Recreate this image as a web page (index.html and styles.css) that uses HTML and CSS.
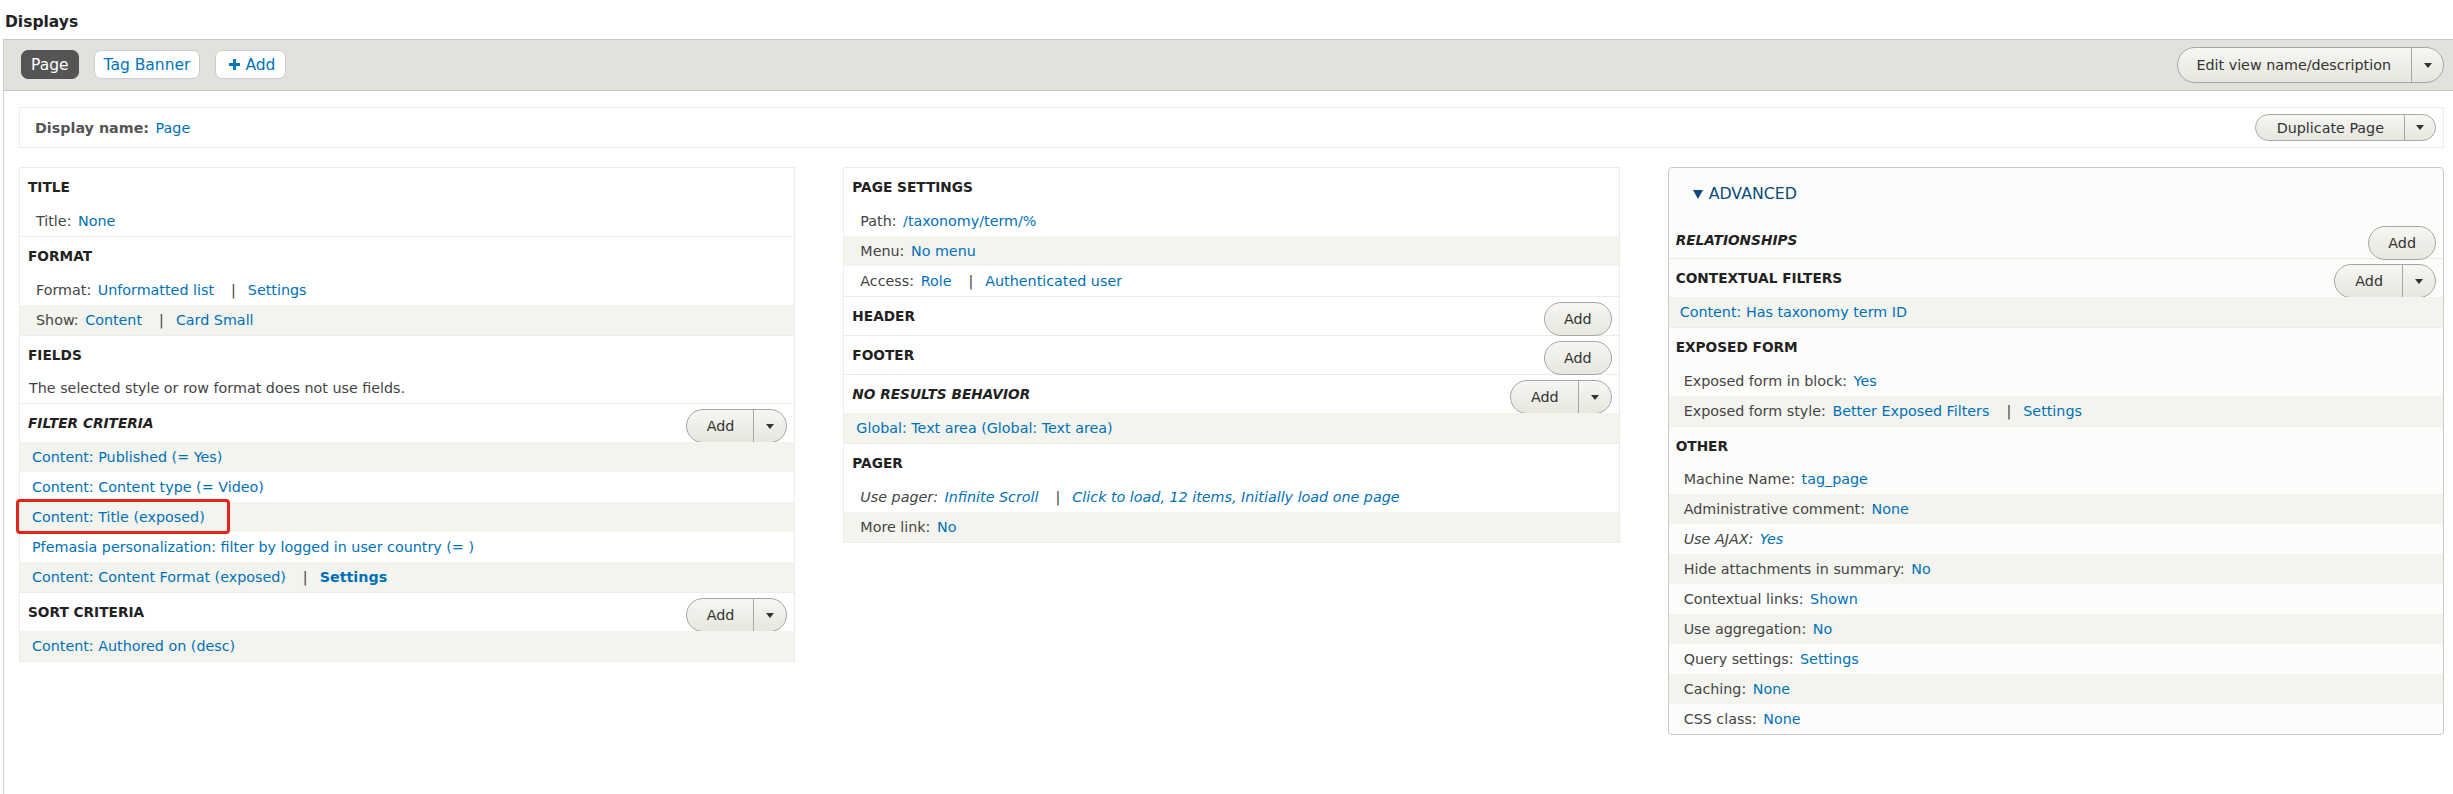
FILE: index.html
```html
<!DOCTYPE html>
<html lang="en">
<head>
<meta charset="utf-8">
<title>Displays</title>
<link rel="stylesheet" href="styles.css">
</head>
<body>
<h2 class="page-title">Displays</h2>
<div class="display-wrap">
  <div class="display-bar">
    <ul class="display-tabs">
      <li><a class="tab is-active">Page</a></li>
      <li><a class="tab">Tag Banner</a></li>
      <li><a class="tab tab-add"><svg class="plus" viewBox="0 0 12 12" width="11" height="11"><path d="M4.4 0h3.2v4.4H12v3.2H7.6V12H4.4V7.6H0V4.4h4.4z" fill="#0074bd"/></svg>Add</a></li>
    </ul>
    <div class="dropbutton db-lg"><span class="db-main">Edit view name/description</span><span class="db-toggle"><i class="caret"></i></span></div>
  </div>

  <div class="display-name-box">
    <div><span class="dn-label">Display name:</span> <a class="link">Page</a></div>
    <div class="dropbutton db-sm"><span class="db-main">Duplicate Page</span><span class="db-toggle"><i class="caret"></i></span></div>
  </div>

  <div class="columns">
    <!-- First column -->
    <div class="column">
      <section class="bucket">
        <div class="bucket-head"><h3>Title</h3></div>
        <div class="row"><span class="lbl">Title:</span> <a class="link">None</a></div>
      </section>
      <section class="bucket">
        <div class="bucket-head"><h3>Format</h3></div>
        <div class="row"><span class="lbl">Format:</span> <a class="link">Unformatted list</a><span class="sep">|</span><a class="link">Settings</a></div>
        <div class="row even"><span class="lbl">Show:</span> <a class="link">Content</a><span class="sep">|</span><a class="link">Card Small</a></div>
      </section>
      <section class="bucket">
        <div class="bucket-head"><h3>Fields</h3></div>
        <p class="note">The selected style or row format does not use fields.</p>
      </section>
      <section class="bucket">
        <div class="bucket-head"><h3 class="overridden">Filter criteria</h3>
          <div class="dropbutton"><span class="db-main">Add</span><span class="db-toggle"><i class="caret"></i></span></div>
        </div>
        <div class="row plain even"><a class="link">Content: Published (= Yes)</a></div>
        <div class="row plain"><a class="link">Content: Content type (= Video)</a></div>
        <div class="row plain even"><a class="link">Content: Title (exposed)</a><span class="highlight"></span></div>
        <div class="row plain"><a class="link">Pfemasia personalization: filter by logged in user country (= )</a></div>
        <div class="row plain even"><a class="link">Content: Content Format (exposed)</a><span class="sep">|</span><a class="link strong">Settings</a></div>
      </section>
      <section class="bucket">
        <div class="bucket-head"><h3>Sort criteria</h3>
          <div class="dropbutton"><span class="db-main">Add</span><span class="db-toggle"><i class="caret"></i></span></div>
        </div>
        <div class="row plain even"><a class="link">Content: Authored on (desc)</a></div>
      </section>
    </div>

    <!-- Second column -->
    <div class="column">
      <section class="bucket">
        <div class="bucket-head"><h3>Page settings</h3></div>
        <div class="row"><span class="lbl">Path:</span> <a class="link">/taxonomy/term/%</a></div>
        <div class="row even"><span class="lbl">Menu:</span> <a class="link">No menu</a></div>
        <div class="row"><span class="lbl">Access:</span> <a class="link">Role</a><span class="sep">|</span><a class="link">Authenticated user</a></div>
      </section>
      <section class="bucket">
        <div class="bucket-head"><h3>Header</h3><span class="button">Add</span></div>
      </section>
      <section class="bucket">
        <div class="bucket-head"><h3>Footer</h3><span class="button">Add</span></div>
      </section>
      <section class="bucket">
        <div class="bucket-head"><h3 class="overridden">No results behavior</h3>
          <div class="dropbutton"><span class="db-main">Add</span><span class="db-toggle"><i class="caret"></i></span></div>
        </div>
        <div class="row plain even"><a class="link">Global: Text area (Global: Text area)</a></div>
      </section>
      <section class="bucket">
        <div class="bucket-head"><h3>Pager</h3></div>
        <div class="row italic"><span class="lbl">Use pager:</span> <a class="link">Infinite Scroll</a><span class="sep">|</span><a class="link">Click to load, 12 items, Initially load one page</a></div>
        <div class="row even"><span class="lbl">More link:</span> <a class="link">No</a></div>
      </section>
    </div>

    <!-- Third column -->
    <div class="column advanced">
      <div class="summary"><span class="tri"></span>Advanced</div>
      <section class="bucket">
        <div class="bucket-head short"><h3 class="overridden">Relationships</h3><span class="button">Add</span></div>
      </section>
      <section class="bucket">
        <div class="bucket-head"><h3>Contextual filters</h3>
          <div class="dropbutton"><span class="db-main">Add</span><span class="db-toggle"><i class="caret"></i></span></div>
        </div>
        <div class="row plain even"><a class="link">Content: Has taxonomy term ID</a></div>
      </section>
      <section class="bucket">
        <div class="bucket-head"><h3>Exposed form</h3></div>
        <div class="row"><span class="lbl">Exposed form in block:</span> <a class="link">Yes</a></div>
        <div class="row even"><span class="lbl">Exposed form style:</span> <a class="link">Better Exposed Filters</a><span class="sep">|</span><a class="link">Settings</a></div>
      </section>
      <section class="bucket">
        <div class="bucket-head short"><h3>Other</h3></div>
        <div class="row"><span class="lbl">Machine Name:</span> <a class="link">tag_page</a></div>
        <div class="row even"><span class="lbl">Administrative comment:</span> <a class="link">None</a></div>
        <div class="row italic"><span class="lbl">Use AJAX:</span> <a class="link">Yes</a></div>
        <div class="row even"><span class="lbl">Hide attachments in summary:</span> <a class="link">No</a></div>
        <div class="row"><span class="lbl">Contextual links:</span> <a class="link">Shown</a></div>
        <div class="row even"><span class="lbl">Use aggregation:</span> <a class="link">No</a></div>
        <div class="row"><span class="lbl">Query settings:</span> <a class="link">Settings</a></div>
        <div class="row even"><span class="lbl">Caching:</span> <a class="link">None</a></div>
        <div class="row"><span class="lbl">CSS class:</span> <a class="link">None</a></div>
      </section>
    </div>
  </div>
</div>
</body>
</html>
```
FILE: styles.css
```css
html, body {
  margin: 0;
  padding: 0;
  background: #fff;
}
body {
  font-family: "DejaVu Sans", "Liberation Sans", sans-serif;
  font-size: 14.3px;
  color: #333;
  overflow: hidden;
}
.page-title {
  margin: 0;
  padding: 12px 0 0 5px;
  height: 27px;
  line-height: 20px;
  font-size: 15.5px;
  font-weight: bold;
  color: #222;
}
.display-wrap {
  margin-left: 3px;
  border-left: 1px solid #cfcfcf;
  min-height: calc(100vh - 39px);
}
.display-bar {
  display: flex;
  align-items: center;
  justify-content: space-between;
  height: 50px;
  padding: 0 9px 0 17px;
  background: #e1e2dc;
  border-top: 1px solid #c8c8c4;
  border-bottom: 1px solid #c8c8c4;
}
.display-tabs {
  list-style: none;
  margin: 0;
  padding: 0;
  display: flex;
  gap: 15px;
  margin-top: -1px;
}
.tab {
  display: flex;
  align-items: center;
  gap: 5px;
  height: 27px;
  padding: 0 9px;
  border: 1px solid #ccc;
  border-radius: 7px;
  background: #fff;
  color: #0074bd;
  font-size: 15.5px;
  text-decoration: none;
}
.tab.tab-add { padding: 0 10px 0 13px; }
.tab.is-active {
  background: #555;
  border-color: #555;
  color: #fff;
}
.tab .plus { display: block; }

.link {
  color: #0071b8;
  text-decoration: none;
}
.link.strong { font-weight: bold; }

.dropbutton {
  display: inline-flex;
  align-items: stretch;
  box-sizing: border-box;
  height: 34px;
  border: 1px solid #a6a6a6;
  border-radius: 20px;
  background: linear-gradient(#f6f6f3, #e7e7df);
  color: #333;
  white-space: nowrap;
}
.db-main {
  display: flex;
  align-items: center;
  padding: 0 19px 0 20px;
}
.db-toggle {
  display: flex;
  align-items: center;
  justify-content: center;
  width: 32px;
  border-left: 1px solid #a6a6a6;
}
.caret {
  width: 0;
  height: 0;
  border-left: 4px solid transparent;
  border-right: 4px solid transparent;
  border-top: 5px solid #333;
}
.db-lg { height: 36px; }
.db-lg .db-main { padding: 0 20px 0 18px; }
.db-lg .db-toggle { width: 31px; }
.db-sm { height: 27px; }
.db-sm .db-main { padding: 0 20px 0 21px; }
.db-sm .db-toggle { width: 30px; }

.button {
  display: inline-flex;
  align-items: center;
  box-sizing: border-box;
  height: 34px;
  padding: 0 19px;
  border: 1px solid #a6a6a6;
  border-radius: 20px;
  background: linear-gradient(#f6f6f3, #e7e7df);
  color: #333;
}

.display-name-box {
  display: flex;
  align-items: center;
  justify-content: space-between;
  box-sizing: border-box;
  height: 41px;
  margin: 16px 9px 0 15px;
  padding: 0 7px 0 15px;
  border: 1px solid #ececE8;
}
.dn-label {
  font-weight: bold;
  color: #555;
  margin-right: 2px;
}

.columns {
  display: grid;
  grid-template-columns: repeat(3, 1fr);
  column-gap: 48px;
  align-items: start;
  margin: 19px 9px 0 15px;
}
.column {
  border: 1px solid #ecece8;
  background: #fff;
}
.bucket + .bucket {
  border-top: 1px solid #ecece8;
}
.bucket-head {
  display: flex;
  justify-content: space-between;
  align-items: flex-start;
  height: 38px;
  padding: 0 7px 0 8px;
}
.bucket-head.short { height: 37px; }
.bucket-head h3 {
  margin: 0;
  line-height: 38px;
  font-size: 13.7px;
  font-weight: bold;
  text-transform: uppercase;
  color: #222;
}
.bucket-head h3.overridden { font-style: italic; }
.bucket-head .dropbutton,
.bucket-head .button {
  margin-top: 5px;
}
.row {
  position: relative;
  height: 30px;
  line-height: 30px;
  padding-left: 16px;
  white-space: nowrap;
}
.row.plain { padding-left: 12px; }
.row.even { background: #f3f4ee; }
.row.italic { font-style: italic; }
.lbl {
  color: #444;
  margin-right: 2px;
}
.sep {
  color: #444;
  margin: 0 12px 0 17px;
}
.note {
  margin: 0;
  height: 29px;
  line-height: 29px;
  padding-left: 9px;
  color: #444;
}
.highlight {
  position: absolute;
  left: -4px;
  top: -3px;
  width: 214px;
  height: 35px;
  box-sizing: border-box;
  border: 3px solid #e8231c;
  border-radius: 4px;
}

.column.advanced {
  border: 1px solid #c9c9c5;
  border-radius: 4px;
  background: #fcfcfa;
}
.summary {
  display: flex;
  align-items: center;
  padding: 16px 0 17px 24px;
  line-height: 20px;
  font-size: 15.8px;
  text-transform: uppercase;
  color: #0a4a7c;
}
.summary .tri {
  width: 0;
  height: 0;
  border-left: 5px solid transparent;
  border-right: 5px solid transparent;
  border-top: 9px solid #0a4a7c;
  margin-right: 6px;
}
.advanced .bucket-head { padding-left: 7px; }
.advanced .row { padding-left: 15px; }
.advanced .row.plain { padding-left: 11px; }
.advanced .bucket:first-of-type { border-top: 0; }
```
